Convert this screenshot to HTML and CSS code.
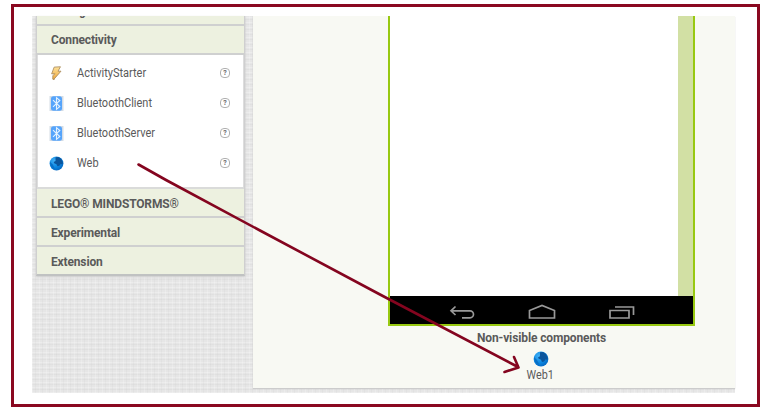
FILE: index.html
```
<!DOCTYPE html>
<html lang="en">
<head>
<meta charset="utf-8">
<title>Designer</title>
<link rel="stylesheet" href="styles.css">
</head>
<body>
<svg class="defs" width="0" height="0">
  <defs>
    <radialGradient id="sea" cx=".35" cy=".3" r=".75"><stop offset="0" stop-color="#42b0f5"/><stop offset=".6" stop-color="#0c88e2"/><stop offset="1" stop-color="#0568c2"/></radialGradient>
    <linearGradient id="gold" x1="0" y1="0" x2="0" y2="1"><stop offset="0" stop-color="#ffe39a"/><stop offset="1" stop-color="#eda63c"/></linearGradient>
    <symbol id="globe" viewBox="0 0 16 16">
      <circle cx="8" cy="8" r="7.4" fill="url(#sea)"/>
      <path d="M7 1.200 10 1l3 2 1.800 4-.5 2-1.600-.8L11 10.500l-2 .5-1-2.200-2.500-1.200L5 6.500l2-1.300z" fill="#0b559c"/>
      <path d="M1 6l3 3 2 4-1 1.200Q.8 11 1 6z" fill="#0871c8"/>
    </symbol>
    <symbol id="bluetooth" viewBox="0 0 14 15">
      <path d="M0 0h14v15H0z" fill="#d4dce5"/>
      <rect x="1.500" y=".3" width="11" height="14.400" rx="2.500" fill="#55a4fb"/>
      <path d="M3.500 4.200 10.300 10.500 7 13.300V1.700l3.300 2.800-6.800 6.300" fill="none" stroke="#e3f2ff" stroke-width="1.100"/>
    </symbol>
    <symbol id="bolt" viewBox="0 0 14 16">
      <path d="M4.500 1.200 11.200.8 8.600 5.600l3.200-.1-7.800 8.900.7-.1L3 14l.1-3.600 2.100-2.200L1.800 8.400z" fill="url(#gold)" stroke="#a88a5b" stroke-width=".9"/>
    </symbol>
  </defs>
</svg>
<div class="frame">
  <div class="workspace">
    <aside class="palette">
      <div class="head first"><span>Storage</span></div>
      <div class="head open">Connectivity</div>
      <ul class="items">
        <li><svg class="icon"><use href="#bolt"/></svg><span>ActivityStarter</span><i class="help">?</i></li>
        <li><svg class="icon"><use href="#bluetooth"/></svg><span>BluetoothClient</span><i class="help">?</i></li>
        <li><svg class="icon"><use href="#bluetooth"/></svg><span>BluetoothServer</span><i class="help">?</i></li>
        <li><svg class="icon"><use href="#globe"/></svg><span>Web</span><i class="help">?</i></li>
      </ul>
      <div class="head">LEGO® MINDSTORMS®</div>
      <div class="head">Experimental</div>
      <div class="head last">Extension</div>
    </aside>
    <main class="viewer">
      <div class="phone">
        <div class="screen"><div class="scroll"></div></div>
        <svg class="nav" viewBox="0 0 303 28" fill="none" stroke="#999" stroke-width="1.700">
          <path d="M65.500 10.500 61 14.800l4.500 4.200M61 14.800H80a3.500 3.500 0 0 1 0 7h-8"/>
          <path d="M139.500 22v-7.500l12.500-5 12.500 5V22z"/>
          <path d="M220 14.500h19V22h-19zM225 11h18.500v8"/>
        </svg>
      </div>
      <div class="hidden-title">Non-visible components</div>
      <div class="component"><svg class="globe"><use href="#globe"/></svg><span>Web1</span></div>
    </main>
  </div>
</div>
<svg class="arrow" viewBox="0 0 768 413" fill="none" stroke="#84051f" stroke-width="2.600" stroke-linecap="round" stroke-linejoin="round">
  <path d="M138.500 164.500 166 180 260 230.500 380 294.500 518 367M514 357l4.500 10.500-14 4.500"/>
</svg>
</body>
</html>
```
FILE: styles.css
```
* { box-sizing: border-box; }
body {
  margin: 0;
  width: 768px;
  height: 413px;
  padding: 4px 8px 6px 11px;
  background: #fff;
  color: #5a5a5a;
  font: 12px/14px Roboto, sans-serif;
  overflow: hidden;
}
.defs { position: absolute; }
.frame {
  height: 403px;
  border: 3px solid #8a0820;
  padding: 9px 22px 8px 18px;
}
.workspace {
  display: flex;
  justify-content: space-between;
  height: 377px;
  padding-left: 4px;
  background-color: #e6e6e6;
  background-image:
    repeating-linear-gradient(90deg, rgba(255,255,255,.2) 0 1px, transparent 1px 3px, rgba(190,190,190,.12) 3px 4px, transparent 4px 7px),
    repeating-linear-gradient(0deg, rgba(255,255,255,.25) 0 1px, transparent 1px 3px, rgba(190,190,190,.14) 3px 4px, transparent 4px 5px);
}
.palette {
  width: 209px;
  height: 260px;
  background: #edf1e0;
  border: solid #cfcfd0;
  border-width: 0 1px 2px;
  border-bottom-color: #c0c2c2;
  box-shadow: 0 1px 2px #ccc;
}
.head {
  height: 29px;
  padding: 8px 0 0 14px;
  border-bottom: 2px solid #cfd0d0;
  font-weight: 700;
  letter-spacing: -.15px;
}
.head.open { padding-top: 7px; }
.head.first {
  display: flex;
  align-items: flex-end;
  height: 10px;
  padding-top: 0;
  padding-bottom: 6px;
  overflow: hidden;
}
.head.last { border: 0; height: 27px; }
.items {
  height: 134px;
  margin: 0;
  padding: 3px 14px 0 12px;
  list-style: none;
  background: #fff;
  border-bottom: 2px solid #dadbda;
  box-shadow: inset 1px 0 #ddd, inset -1px 0 #ddd;
}
.items li {
  display: flex;
  align-items: center;
  height: 30px;
}
.items span {
  transform: scaleX(.915);
  transform-origin: left;
}
.icon { width: 15px; height: 15px; margin-right: 13px; }
.help {
  display: flex;
  align-items: center;
  justify-content: center;
  width: 10px;
  height: 10px;
  margin-left: auto;
  border: 1px solid #b0b0b0;
  border-radius: 4px;
  font: 700 7px/8px Roboto, sans-serif;
  color: #666;
}
.viewer {
  width: 482px;
  height: 372px;
  padding-left: 135px;
  background: #f8f9f3;
  box-shadow: 0 1px 1px #ccc;
}
.phone {
  width: 307px;
  height: 310px;
  border: 2px solid #98c911;
  border-top: 0;
  background: #000;
}
.screen {
  display: flex;
  justify-content: flex-end;
  height: 280px;
  background: #fff;
}
.scroll { width: 15px; background: #d2e0a4; }
.nav { display: block; width: 303px; height: 28px; }
.hidden-title {
  width: 307px;
  margin-top: 5px;
  text-align: center;
  font-weight: 700;
  letter-spacing: -.12px;
}
.component {
  display: flex;
  flex-direction: column;
  align-items: center;
  width: 307px;
  margin-top: 6px;
  padding-right: 2px;
}
.component span {
  margin-top: 1px;
  transform: scaleX(.9);
}
.globe { width: 16px; height: 16px; }
.arrow {
  position: absolute;
  left: 0;
  top: 0;
  width: 768px;
  height: 413px;
}
```
